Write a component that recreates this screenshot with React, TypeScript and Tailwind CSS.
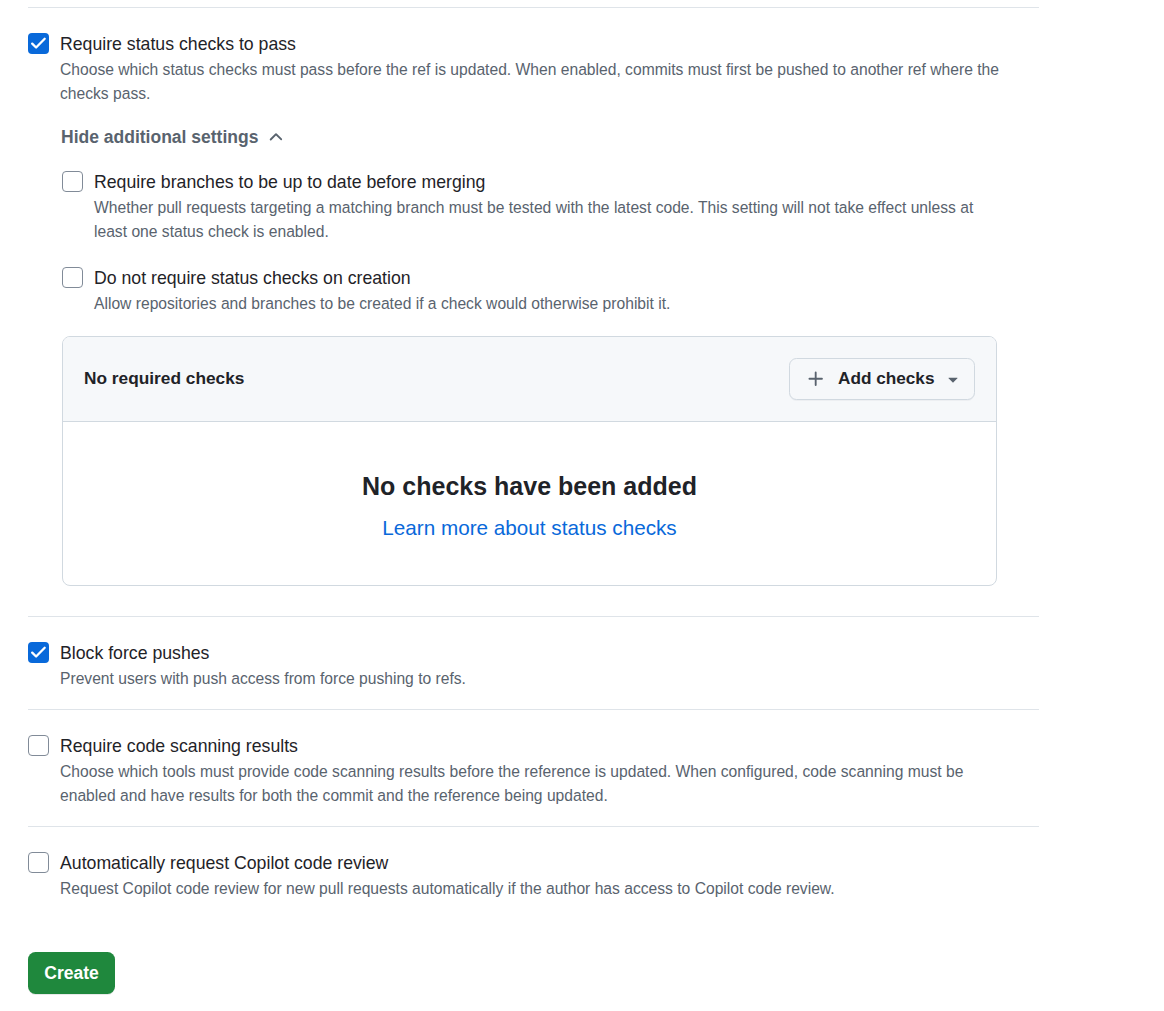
import React from "react";

function Box({ checked }: { checked: boolean }) {
  if (checked) {
    return (
      <span className="mt-[1px] flex h-[21px] w-[21px] shrink-0 items-center justify-center rounded-[4px] bg-[#0969da]">
        <svg width="21" height="21" viewBox="0 0 21 21" fill="none">
          <path d="M4.2 10.6l3.9 3.9 8.6-8.8" stroke="white" strokeWidth="2.3" strokeLinecap="round" strokeLinejoin="round" />
        </svg>
      </span>
    );
  }
  return <span className="mt-[1px] h-[21px] w-[21px] shrink-0 rounded-[4px] border border-[#818b98] bg-white" />;
}

function Item({
  checked,
  title,
  desc,
  children,
}: {
  checked: boolean;
  title: string;
  desc: string;
  children?: React.ReactNode;
}) {
  return (
    <div className="flex gap-[11px]">
      <Box checked={checked} />
      <div className="min-w-0 flex-1">
        <div className="pr-[29px]">
          <div className="text-[17.7px] leading-6 text-[#1f2328]">{title}</div>
          <div className="mt-[2px] text-[15.65px] leading-6 text-[#59636e]">{desc}</div>
        </div>
        {children}
      </div>
    </div>
  );
}

export default function App() {
  return (
    <div className="min-h-screen bg-white font-['Liberation_Sans',Arial,sans-serif]">
      <div className="ml-[28px] w-[1011px] pt-[7px] pb-[17px]">
        <section className="border-t border-[#d1d9e0b3] pt-6 pb-[30px]">
          <Item
            checked
            title="Require status checks to pass"
            desc="Choose which status checks must pass before the ref is updated. When enabled, commits must first be pushed to another ref where the checks pass."
          >
            <div className="ml-[1px] mt-[19px] flex items-center gap-[8px] text-[17.5px] font-bold leading-6 text-[#59636e]">
              <span>Hide additional settings</span>
              <svg width="20" height="20" viewBox="0 0 16 16" fill="#59636e">
                <path d="M3.22 10.53a.749.749 0 0 1 0-1.06l4.25-4.25a.749.749 0 0 1 1.06 0l4.25 4.25a.749.749 0 0 1-1.042 1.018.749.749 0 0 1-.018-.018L8 6.811 4.28 10.53a.75.75 0 0 1-1.06 0Z" />
              </svg>
            </div>
            <div className="ml-[2px] mt-[21px]">
              <Item
                checked={false}
                title="Require branches to be up to date before merging"
                desc="Whether pull requests targeting a matching branch must be tested with the latest code. This setting will not take effect unless at least one status check is enabled."
              />
            </div>
            <div className="ml-[2px] mt-[22px]">
              <Item
                checked={false}
                title="Do not require status checks on creation"
                desc="Allow repositories and branches to be created if a check would otherwise prohibit it."
              />
            </div>
            <div className="ml-[2px] mt-[20px] w-[935px] overflow-hidden rounded-[8px] border border-[#d1d9e0]">
              <div className="flex h-[85px] items-center justify-between border-b border-[#d1d9e0] bg-[#f6f8fa] px-[21px]">
                <span className="text-[17.3px] font-bold text-[#1f2328]">No required checks</span>
                <button className="flex h-[42px] w-[186px] items-center rounded-[7.5px] border border-[#d1d9e0] bg-[#f6f8fa] pl-[16px] pr-[11px] shadow-[0_1px_0_0_#1f23280a]">
                  <svg width="20" height="20" viewBox="0 0 16 16" fill="#59636e">
                    <path d="M7.75 2a.75.75 0 0 1 .75.75V7h4.25a.75.75 0 0 1 0 1.5H8.5v4.25a.75.75 0 0 1-1.5 0V8.5H2.75a.75.75 0 0 1 0-1.5H7V2.75A.75.75 0 0 1 7.75 2Z" />
                  </svg>
                  <span className="ml-[12px] text-[17.2px] font-bold text-[#1f2328]">Add checks</span>
                  <svg className="ml-auto" width="20" height="20" viewBox="0 0 16 16" fill="#59636e">
                    <path d="m4.427 7.427 3.396 3.396a.25.25 0 0 0 .354 0l3.396-3.396A.25.25 0 0 0 11.396 7H4.604a.25.25 0 0 0-.177.427Z" />
                  </svg>
                </button>
              </div>
              <div className="flex h-[163px] flex-col items-center pt-[48px]">
                <div className="text-[25px] font-bold leading-8 text-[#1f2328]">No checks have been added</div>
                <a className="mt-[11px] text-[20.7px] leading-[30px] text-[#0969da]" href="#">
                  Learn more about status checks
                </a>
              </div>
            </div>
          </Item>
        </section>
        <section className="border-t border-[#d1d9e0b3] pt-6 pb-[18px]">
          <Item checked title="Block force pushes" desc="Prevent users with push access from force pushing to refs." />
        </section>
        <section className="border-t border-[#d1d9e0b3] pt-6 pb-[18px]">
          <Item
            checked={false}
            title="Require code scanning results"
            desc="Choose which tools must provide code scanning results before the reference is updated. When configured, code scanning must be enabled and have results for both the commit and the reference being updated."
          />
        </section>
        <section className="border-t border-[#d1d9e0b3] pt-6">
          <Item
            checked={false}
            title="Automatically request Copilot code review"
            desc="Request Copilot code review for new pull requests automatically if the author has access to Copilot code review."
          />
        </section>
        <button className="mt-[51px] flex h-[42px] w-[87px] items-center justify-center rounded-[7.5px] bg-[#1f883d] text-[17.5px] font-bold text-white shadow-[0_1px_0_0_#1f23281a]">
          Create
        </button>
      </div>
    </div>
  );
}
